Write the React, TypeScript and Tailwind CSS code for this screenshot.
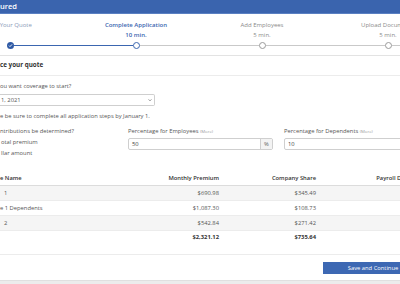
const STEPS = [
  { label: "Get Your Quote", time: "", state: "done", left: "", right: "blue" },
  { label: "Complete Application", time: "10 min.", state: "current", left: "blue", right: "grey" },
  { label: "Add Employees", time: "5 min.", state: "todo", left: "grey", right: "grey" },
  { label: "Upload Documents", time: "5 min.", state: "todo", left: "grey", right: "grey" },
];

const ROWS = [
  { name: "1", premium: "$690.98", share: "$345.49", pad: true },
  { name: "e 1 Dependents", premium: "$1,087.30", share: "$108.73", pad: false },
  { name: "2", premium: "$542.84", share: "$271.42", pad: true },
];

const lineColor = (c: string) =>
  c === "blue" ? "bg-[#3b66b0]" : c === "grey" ? "bg-[#c9c9c9]" : "bg-transparent";

export default function App() {
  return (
    <div className="w-[400px] h-[284px] overflow-hidden bg-white text-[#555] text-[5.8px] font-['Open_Sans',sans-serif]">
      {/* header bar */}
      <div className="h-[14px] bg-[#3a64ae] border-b border-[#5a80c2] flex items-center">
        <span className="text-white text-[7.5px] font-semibold leading-none">ured</span>
      </div>

      {/* stepper */}
      <div className="h-[42px] border-b border-[#e3e3e3] pt-[6px]">
        <div className="-ml-[53px] flex">
          {STEPS.map((s) => {
            const active = s.state !== "todo";
            return (
              <div key={s.label} className="w-[126px] shrink-0 flex flex-col items-center text-[6px]">
                <div
                  className={`h-[10px] leading-[10px] whitespace-nowrap ${
                    s.state === "current" ? "font-semibold text-[#3b66b0]" : active ? "text-[#8a9ab8]" : "text-[#8a8a8a]"
                  }`}
                >
                  {s.label}
                </div>
                <div
                  className={`h-[10px] leading-[10px] whitespace-nowrap ${
                    s.state === "current" ? "font-semibold text-[#3b66b0]" : "text-[#8a8a8a]"
                  }`}
                >
                  {s.time}
                </div>
                <div className="w-full h-[8px] mt-[1px] flex items-center">
                  <div className={`flex-1 h-px ${lineColor(s.left)}`} />
                  {s.state === "done" ? (
                    <span className="w-[7px] h-[7px] rounded-full bg-[#2f5aa5] flex items-center justify-center">
                      <svg viewBox="0 0 10 10" className="w-[5px] h-[5px]">
                        <path d="M2 5.2l2 2 4-4.4" fill="none" stroke="#fff" strokeWidth="1.8" />
                      </svg>
                    </span>
                  ) : (
                    <span
                      className={`w-[7px] h-[7px] rounded-full bg-white border ${
                        s.state === "current" ? "border-[#3b66b0]" : "border-[#9a9a9a]"
                      }`}
                    />
                  )}
                  <div className={`flex-1 h-px ${lineColor(s.right)}`} />
                </div>
              </div>
            );
          })}
        </div>
      </div>

      {/* price quote */}
      <div className="h-[20px] border-b border-[#ececec] flex items-center">
        <h2 className="text-[6.3px] font-bold text-[#333] leading-none">ce your quote</h2>
      </div>

      <p className="mt-[5px] leading-[10px]">ou want coverage to start?</p>
      <div className="mt-[3px] w-[155px] h-[12px] border border-l-0 border-[#cfcfcf] rounded-r-[2px] flex items-center justify-between pr-[2px]">
        <span className="pl-[1px]">1, 2021</span>
        <svg viewBox="0 0 10 10" className="w-[4px] h-[4px]">
          <path d="M1.5 3.5L5 7l3.5-3.5" fill="none" stroke="#555" strokeWidth="1.6" />
        </svg>
      </div>
      <p className="mt-[5px] leading-[10px]">e be sure to complete all application steps by January 1.</p>

      <div className="mt-[5px] flex">
        <div className="w-[128px] shrink-0">
          <p className="leading-[10px]">ntributions be determined?</p>
          <p className="mt-[1px] leading-[11px] pl-[1px]">otal premium</p>
          <p className="leading-[11px] pl-[1px]">llar amount</p>
        </div>
        <div className="w-[145px] shrink-0">
          <p className="leading-[10px] whitespace-nowrap">
            Percentage for Employees <span className="text-[4.3px] text-[#999]">(More)</span>
          </p>
          <div className="mt-[2px] h-[12px] border border-[#cfcfcf] rounded-[2px] flex">
            <span className="flex-1 pl-[3px] leading-[10px] text-[#444]">50</span>
            <span className="w-[12px] bg-[#f3f3f3] border-l border-[#cfcfcf] text-center leading-[10px] text-[#666]">%</span>
          </div>
        </div>
        <div className="ml-[11px] w-[150px] shrink-0">
          <p className="leading-[10px] whitespace-nowrap">
            Percentage for Dependents <span className="text-[4.3px] text-[#999]">(More)</span>
          </p>
          <div className="mt-[2px] h-[12px] border border-[#cfcfcf] rounded-[2px] flex">
            <span className="flex-1 pl-[3px] leading-[10px] text-[#444]">10</span>
          </div>
        </div>
      </div>

      {/* premium table */}
      <div className="mt-[12px] w-[430px]">
        <div className="grid grid-cols-[120px_99px_97px_110px] h-[15px] items-center border-b border-[#dcdcdc] font-semibold text-[#333]">
          <span>e Name</span>
          <span className="text-right">Monthly Premium</span>
          <span className="text-right">Company Share</span>
          <span className="text-right whitespace-nowrap">Payroll Deduction</span>
        </div>
        {ROWS.map((r, i) => (
          <div
            key={r.name}
            className={`grid grid-cols-[120px_99px_97px_110px] h-[15px] items-center border-b border-[#ececec] ${
              i % 2 === 0 ? "bg-[#f5f5f5]" : "bg-white"
            }`}
          >
            <span className={r.pad ? "pl-[4px]" : ""}>{r.name}</span>
            <span className="text-right">{r.premium}</span>
            <span className="text-right">{r.share}</span>
            <span />
          </div>
        ))}
        <div className="grid grid-cols-[120px_99px_97px_110px] h-[13px] items-center font-bold text-[#333]">
          <span />
          <span className="text-right">$2,321.12</span>
          <span className="text-right">$735.64</span>
          <span />
        </div>
      </div>

      <div className="mt-[10px] border-t border-[#ececec]" />
      <button className="mt-[7px] ml-[323px] w-[100px] h-[12px] bg-[#3d68b3] text-white text-center leading-[12px] whitespace-nowrap">
        Save and Continue
      </button>
      <div className="mt-[6px] h-[10px] bg-[#ececec] border-t border-[#e0e0e0]" />
    </div>
  );
}
